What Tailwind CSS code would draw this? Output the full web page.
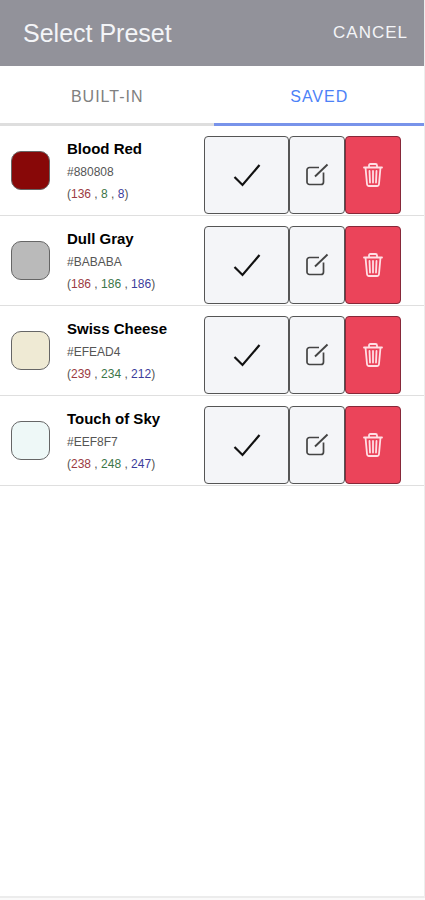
<!DOCTYPE html>
<html lang="en">
<head>
<meta charset="utf-8">
<meta name="viewport" content="width=device-width, initial-scale=1">
<title>Select Preset</title>
<script src="https://cdn.jsdelivr.net/npm/@tailwindcss/browser@4"></script>
</head>
<body class="bg-[#fafafa] font-['Liberation_Sans',Arial,sans-serif] text-black">
<svg class="hidden" aria-hidden="true">
  <symbol id="check" viewBox="0 0 28 24"><path d="M1.500 14 L9.500 22 L26.500 2" fill="none" stroke="#111" stroke-width="2.200"/></symbol>
  <symbol id="edit" viewBox="0 0 24 24"><path d="M14 4.500H4.500a2.500 2.500 0 0 0-2.500 2.500V19a2.500 2.500 0 0 0 2.500 2.500H16a2.500 2.500 0 0 0 2.500-2.500V9.500" fill="none" stroke="#444" stroke-width="1.700"/><path d="M10 13.500 L22.500 1.500" fill="none" stroke="#444" stroke-width="1.900"/></symbol>
  <symbol id="trash" viewBox="0 0 20 24"><g fill="none" stroke="#ffdfe4" stroke-width="1.800" stroke-linejoin="round" stroke-linecap="round"><path d="M1 4.500H19M6 4V2.500Q6 1 7.500 1h5q1.500 0 1.500 1.500V4M2.500 4.500L4 21q.2 2 2 2h8q1.800 0 2-2L17.500 4.500"/><path d="M6.500 8l.5 11.500M10 8v11.500M13.500 8l-.5 11.500"/></g></symbol>
</svg>
<div class="flex min-h-screen flex-col pb-0.5">
  <div class="flex flex-1 flex-col border-r border-b-2 border-r-[#ededed] border-b-[#ececec] bg-white">
    <header class="flex h-[66px] items-center justify-between bg-[#92929a] pr-4 pl-[23px]">
      <h1 class="text-[25px] leading-8 text-[#f4f5f8]">Select Preset</h1>
      <button type="button" class="text-[17px] leading-6 tracking-[1px] text-[#f4f5f8]">CANCEL</button>
    </header>
    <nav class="grid h-[60px] grid-cols-[43fr_42fr] text-base tracking-[1px]">
      <button type="button" class="border-b-3 border-[#dedede] pt-1 text-[#808080]">BUILT-IN</button>
      <button type="button" class="border-b-3 border-[#7893ea] pt-1 text-[#4c82f7]">SAVED</button>
    </nav>
    <main>
      <ul id="presets"></ul>
    </main>
  </div>
</div>
<template id="row">
  <li class="flex h-[90px] items-end justify-between border-b border-[#dfdfdf] pr-[23px] pl-[11px]">
    <div class="flex items-center gap-[17px] self-center">
      <span data-swatch class="size-[39px] rounded-[10px] border border-[#666]"></span>
      <div>
        <h2 data-name class="text-[15px] leading-6 font-bold"></h2>
        <p data-hex class="text-xs leading-[22px] text-[#555]"></p>
        <p class="text-xs leading-[22px] text-[#555]">(<span data-r class="text-[#9b3b42]"></span> , <span data-g class="text-[#3c7548]"></span> , <span data-b class="text-[#3c3c9b]"></span>)</p>
      </div>
    </div>
    <div class="flex pb-px">
      <button type="button" aria-label="Use preset" class="flex h-[78px] w-[85px] items-center justify-center rounded-[4px] border border-[#555] bg-[#f4f5f8]"><svg class="h-6 w-7"><use href="#check"/></svg></button>
      <button type="button" aria-label="Edit preset" class="flex h-[78px] w-14 items-center justify-center rounded-[4px] border border-[#555] bg-[#f4f5f8]"><svg class="size-6"><use href="#edit"/></svg></button>
      <button type="button" aria-label="Delete preset" class="flex h-[78px] w-14 items-center justify-center rounded-[4px] border border-[#862839] bg-[#eb445a]"><svg class="h-6 w-5"><use href="#trash"/></svg></button>
    </div>
  </li>
</template>
<script>
const presets = [
  ["Blood Red", "#880808", 136, 8, 8],
  ["Dull Gray", "#BABABA", 186, 186, 186],
  ["Swiss Cheese", "#EFEAD4", 239, 234, 212],
  ["Touch of Sky", "#EEF8F7", 238, 248, 247]
];
const list = document.getElementById("presets");
for (const [name, hex, r, g, b] of presets) {
  const row = document.getElementById("row").content.cloneNode(true);
  row.querySelector("[data-swatch]").style.backgroundColor = hex;
  for (const [key, value] of Object.entries({ name, hex, r, g, b })) row.querySelector(`[data-${key}]`).textContent = value;
  list.append(row);
}
</script>
</body>
</html>
